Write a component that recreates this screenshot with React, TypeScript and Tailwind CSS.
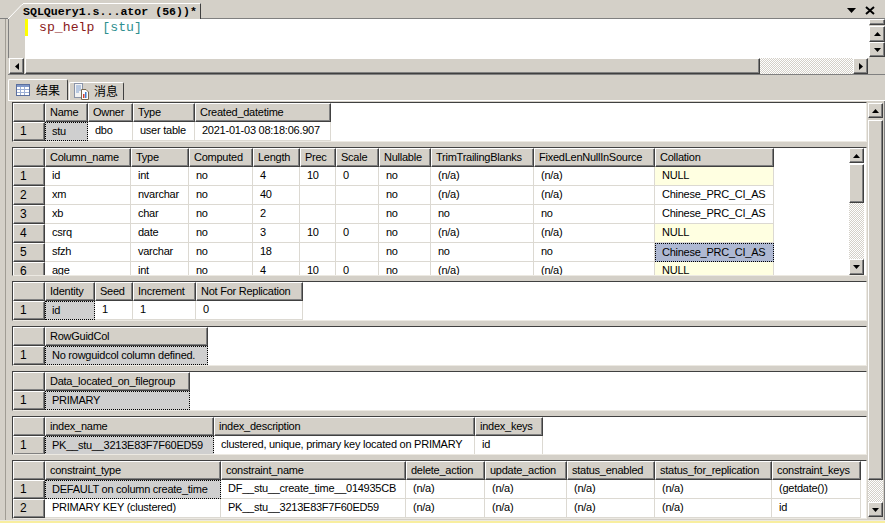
import React from "react";

type Col = { name: string; w: number };
type Cell = { t: string; sel?: boolean; blue?: boolean; null?: boolean };
type Grid = {
  h: number;
  scroll?: boolean;
  cols: Col[];
  rows: (string | Cell)[][];
};

const ui = { fontFamily: '"Liberation Sans", "Noto Sans CJK SC", sans-serif' };

const grids: Grid[] = [
  {
    h: 40,
    cols: [
      { name: "Name", w: 43 },
      { name: "Owner", w: 45 },
      { name: "Type", w: 62 },
      { name: "Created_datetime", w: 136 },
    ],
    rows: [[{ t: "stu", sel: true }, "dbo", "user table", "2021-01-03 08:18:06.907"]],
  },
  {
    h: 129,
    scroll: true,
    cols: [
      { name: "Column_name", w: 86 },
      { name: "Type", w: 58 },
      { name: "Computed", w: 64 },
      { name: "Length", w: 47 },
      { name: "Prec", w: 36 },
      { name: "Scale", w: 43 },
      { name: "Nullable", w: 52 },
      { name: "TrimTrailingBlanks", w: 103 },
      { name: "FixedLenNullInSource", w: 121 },
      { name: "Collation", w: 119 },
    ],
    rows: [
      ["id", "int", "no", "4", "10", "0", "no", "(n/a)", "(n/a)", { t: "NULL", null: true }],
      ["xm", "nvarchar", "no", "40", "", "", "no", "(n/a)", "(n/a)", "Chinese_PRC_CI_AS"],
      ["xb", "char", "no", "2", "", "", "no", "no", "no", "Chinese_PRC_CI_AS"],
      ["csrq", "date", "no", "3", "10", "0", "no", "(n/a)", "(n/a)", { t: "NULL", null: true }],
      ["sfzh", "varchar", "no", "18", "", "", "no", "no", "no", { t: "Chinese_PRC_CI_AS", blue: true }],
      ["age", "int", "no", "4", "10", "0", "no", "(n/a)", "(n/a)", { t: "NULL", null: true }],
    ],
  },
  {
    h: 40,
    cols: [
      { name: "Identity", w: 50 },
      { name: "Seed", w: 38 },
      { name: "Increment", w: 63 },
      { name: "Not For Replication", w: 107 },
    ],
    rows: [[{ t: "id", sel: true }, "1", "1", "0"]],
  },
  {
    h: 40,
    cols: [{ name: "RowGuidCol", w: 163 }],
    rows: [[{ t: "No rowguidcol column defined.", sel: true }]],
  },
  {
    h: 40,
    cols: [{ name: "Data_located_on_filegroup", w: 145 }],
    rows: [[{ t: "PRIMARY", sel: true }]],
  },
  {
    h: 39,
    cols: [
      { name: "index_name", w: 169 },
      { name: "index_description", w: 261 },
      { name: "index_keys", w: 68 },
    ],
    rows: [[{ t: "PK__stu__3213E83F7F60ED59", sel: true }, "clustered, unique, primary key located on PRIMARY", "id"]],
  },
  {
    h: 59,
    cols: [
      { name: "constraint_type", w: 176 },
      { name: "constraint_name", w: 185 },
      { name: "delete_action", w: 79 },
      { name: "update_action", w: 82 },
      { name: "status_enabled", w: 88 },
      { name: "status_for_replication", w: 117 },
      { name: "constraint_keys", w: 89 },
    ],
    rows: [
      [{ t: "DEFAULT on column create_time", sel: true }, "DF__stu__create_time__014935CB", "(n/a)", "(n/a)", "(n/a)", "(n/a)", "(getdate())"],
      ["PRIMARY KEY (clustered)", "PK__stu__3213E83F7F60ED59", "(n/a)", "(n/a)", "(n/a)", "(n/a)", "id"],
    ],
  },
];

const dither =
  "bg-[repeating-conic-gradient(#d4d0c8_0_25%,#ffffff_0_50%)] bg-[length:2px_2px]";

const btn =
  "flex items-center justify-center shrink-0 bg-[#d4d0c8] border border-t-white border-l-white border-r-[#404040] border-b-[#404040] shadow-[inset_-1px_-1px_0_#808080]";

const Arrow = ({ dir }: { dir: "up" | "down" | "left" | "right" }) => {
  const pts = {
    up: "3.5,0 0,4 7,4",
    down: "0,0 7,0 3.5,4",
    left: "4,0 4,7 0,3.5",
    right: "0,0 4,3.5 0,7",
  }[dir];
  const horiz = dir === "left" || dir === "right";
  return (
    <svg width={horiz ? 4 : 7} height={horiz ? 7 : 4}>
      <polygon points={pts} fill="#000" />
    </svg>
  );
};

const GridIcon = () => (
  <svg width="14" height="13" viewBox="0 0 14 13">
    <rect x="0.5" y="0.5" width="13" height="11" fill="#fff" stroke="#5b6f9e" />
    <rect x="1" y="1" width="12" height="2" fill="#7f97c8" />
    <path d="M1 5.5H13M1 8.5H13M4.5 3V11M8.5 3V11" stroke="#9db0d6" fill="none" />
  </svg>
);

const DocIcon = () => (
  <svg width="15" height="17" viewBox="0 0 15 17">
    <rect x="0.5" y="0.5" width="8" height="14" fill="#f3f3f3" stroke="#8a94a8" />
    <path d="M2 3H7M2 5H7M2 7H7M2 9H5" stroke="#7f9fd0" fill="none" />
    <path d="M7.5 6.5H12L14.5 9V16.5H7.5Z" fill="#fff" stroke="#7a6a50" />
    <rect x="9" y="11" width="1.5" height="4" fill="#d04030" />
    <rect x="11" y="9" width="1.5" height="6" fill="#3f7fd0" />
  </svg>
);

const ResultGrid = ({ g }: { g: Grid }) => (
  <div
    className="flex bg-white border border-t-[#404040] border-l-[#404040] border-r-[#ece9e2] border-b-[#ece9e2] overflow-hidden shrink-0"
    style={{ height: g.h }}
  >
    <div className="flex-1 min-w-0 overflow-hidden">
      <div className="flex w-max">
        <div className={`${btn} w-[32px] h-[19px]`} />
        {g.cols.map((c) => (
          <div
            key={c.name}
            className={`${btn} !justify-start h-[19px] pl-[4px] pb-[1px] text-[11px] tracking-[-0.25px] leading-none whitespace-nowrap`}
            style={{ width: c.w }}
          >
            {c.name}
          </div>
        ))}
      </div>
      {g.rows.map((row, i) => (
        <div key={i} className="flex h-[19px] w-max">
          <div className={`${btn} !justify-start w-[32px] pl-[6px] pb-[1px] text-[12px] leading-none`}>{i + 1}</div>
          {row.map((cell, j) => {
            const c: Cell = typeof cell === "string" ? { t: cell } : cell;
            let tone = "bg-white border-b border-r border-[#dcd9d2] pl-[7px]";
            if (c.sel) tone = "bg-[#cfcfcf] border border-dotted border-black pl-[6px]";
            if (c.blue) tone = "bg-[#aeb8d2] border border-dotted border-black pl-[6px]";
            if (c.null) tone = "bg-[#ffffe1] border-b border-r border-[#dcd9d2] pl-[7px]";
            return (
              <div
                key={j}
                className={`flex items-center pb-[1px] text-[11px] tracking-[-0.25px] leading-none whitespace-nowrap overflow-hidden ${tone}`}
                style={{ width: g.cols[j].w }}
              >
                {c.t}
              </div>
            );
          })}
        </div>
      ))}
    </div>
    {g.scroll && (
      <div className="w-[15px] mr-[2px] flex flex-col shrink-0 h-[127px]">
        <div className={`${btn} h-[15px]`}><Arrow dir="up" /></div>
        <div className={`${btn} h-[39px] mt-[1px]`} />
        <div className={`flex-1 ${dither}`} />
        <div className={`${btn} h-[16px]`}><Arrow dir="down" /></div>
      </div>
    )}
  </div>
);

export default function App() {
  return (
    <div className="w-[885px] h-[523px] overflow-hidden bg-[#d4d0c8] flex flex-col text-black" style={ui}>
      {/* document tab strip */}
      <div className="relative h-[19px] flex items-end pl-[8px] pr-[4px] border-b border-[#808080] shrink-0">
        <svg width="15" height="16" className="mb-[-1px] shrink-0">
          <polygon points="0,16 14,1.5 15,1.5 15,16" fill="#d4d0c8" />
          <polyline points="0,16 14,1.5 15,1.5" fill="none" stroke="#ffffff" />
        </svg>
        <div className="h-[16px] w-[178px] mb-[-1px] bg-[#d4d0c8] border-t border-white border-r border-r-[#404040] flex items-center font-['Liberation_Mono'] font-bold text-[11.6px] leading-none whitespace-pre">
          SQLQuery1.s...ator (56))*
        </div>
        <div className="flex-1" />
        <svg width="9" height="5" className="mb-[5px] mr-[9px]">
          <polygon points="0,0 9,0 4.5,5" fill="#000" />
        </svg>
        <svg width="10" height="9" className="mb-[3px] mr-[6px]">
          <path d="M1 1L9 8M9 1L1 8" stroke="#000" strokeWidth="2" fill="none" />
        </svg>
      </div>

      <div className="flex flex-1 min-h-0">
        <div className="w-[8px] shrink-0 pl-[5px]">
          <div className="w-[1px] h-full bg-[#a09c94]" />
        </div>
        <div className="flex-1 min-w-0 flex flex-col">
          {/* query editor */}
          <div className="flex h-[39px] shrink-0">
            <div className="w-[17px] border-l border-[#808080] shrink-0" />
            <div className="flex-1 bg-white flex items-start">
              <div className="w-[3px] h-[17px] bg-[#ffff00] shrink-0" />
              <div className="ml-[11px] mt-[1px] font-['Liberation_Mono'] text-[13.2px] leading-[16px] whitespace-pre">
                <span className="text-[#8a1a1a]">sp_help</span> <span className="text-[#2f8f8f]">[stu]</span>
              </div>
            </div>
            <div className="w-[16px] flex flex-col shrink-0">
              <div className={`${btn} h-[6px]`} />
              <div className={`${btn} h-[16px] mt-[1px]`}><Arrow dir="up" /></div>
              <div className={`${btn} h-[15px]`}><Arrow dir="down" /></div>
            </div>
          </div>
          <div className="flex h-[16px] shrink-0 border-b border-[#808080] box-content">
            <div className={`${btn} w-[15px] ml-[1px]`}><Arrow dir="left" /></div>
            <div className={`${btn} w-[735px] ml-[1px]`} />
            <div className={`flex-1 ${dither}`} />
            <div className={`${btn} w-[15px]`}><Arrow dir="right" /></div>
            <div className="w-[17px]" />
          </div>

          {/* results / messages tabs */}
          <div className="h-[25px] flex items-end shrink-0">
            <div className="h-[21px] w-[60px] pt-[1px] rounded-t-[2px] border border-b-0 border-t-white border-l-white border-r-[#404040] flex items-center gap-[6px] pl-[7px] text-[12px]">
              <GridIcon />
              结果
            </div>
            <div className="h-[18px] w-[55px] ml-[1px] rounded-t-[2px] border border-b-0 border-t-white border-l-white border-r-[#404040] flex items-center gap-[5px] pl-[4px] text-[12px]">
              <DocIcon />
              消息
            </div>
          </div>

          {/* result grids */}
          <div className="flex flex-1 min-h-0 border-t border-white">
            <div className="w-[855px] ml-[4px] pt-[1px] flex flex-col gap-[5px] overflow-hidden shrink-0">
              {grids.map((g) => (
                <ResultGrid key={g.cols[0].name} g={g} />
              ))}
            </div>
            <div className="w-[15px] ml-[1px] pt-[2px] pb-[3px] flex flex-col shrink-0">
              <div className={`${btn} h-[15px]`}><Arrow dir="up" /></div>
              <div className={`${btn} flex-1 mt-[2px]`} />
              <div className={`${dither} h-[22px]`} />
              <div className={`${btn} h-[15px]`}><Arrow dir="down" /></div>
            </div>
            <div className="flex-1 border-r border-[#808080]" />
          </div>
        </div>
      </div>
      <div className="h-[3px] bg-[#f8eea0] border-t border-[#ece9e2] shrink-0" />
    </div>
  );
}
